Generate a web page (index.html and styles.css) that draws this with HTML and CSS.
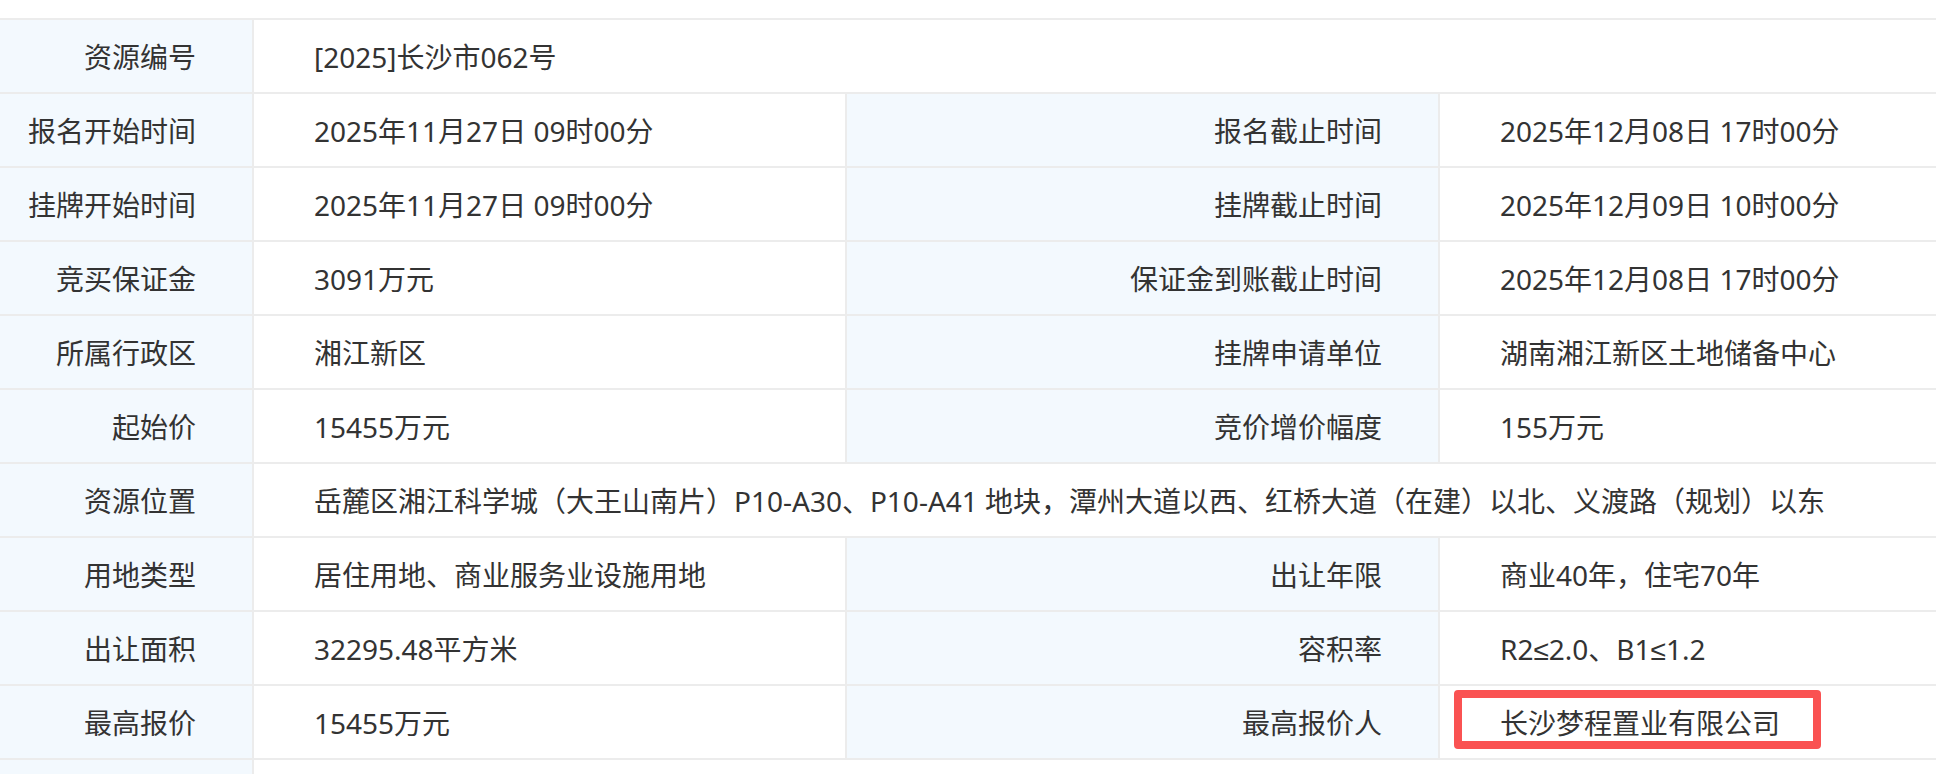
FILE: index.html
```html
<!DOCTYPE html>
<html lang="zh-CN">
<head>
<meta charset="utf-8">
<title>资源详情</title>
<link rel="stylesheet" href="styles.css">
</head>
<body>
<div class="page">
  <div class="info-grid">
    <div class="label">资源编号</div>
    <div class="value span3">[2025]长沙市062号</div>

    <div class="label">报名开始时间</div>
    <div class="value">2025年11月27日 09时00分</div>
    <div class="label">报名截止时间</div>
    <div class="value">2025年12月08日 17时00分</div>

    <div class="label">挂牌开始时间</div>
    <div class="value">2025年11月27日 09时00分</div>
    <div class="label">挂牌截止时间</div>
    <div class="value">2025年12月09日 10时00分</div>

    <div class="label">竞买保证金</div>
    <div class="value">3091万元</div>
    <div class="label">保证金到账截止时间</div>
    <div class="value">2025年12月08日 17时00分</div>

    <div class="label">所属行政区</div>
    <div class="value">湘江新区</div>
    <div class="label">挂牌申请单位</div>
    <div class="value">湖南湘江新区土地储备中心</div>

    <div class="label">起始价</div>
    <div class="value">15455万元</div>
    <div class="label">竞价增价幅度</div>
    <div class="value">155万元</div>

    <div class="label">资源位置</div>
    <div class="value span3">岳麓区湘江科学城（大王山南片）P10-A30、P10-A41 地块，潭州大道以西、红桥大道（在建）以北、义渡路（规划）以东</div>

    <div class="label">用地类型</div>
    <div class="value">居住用地、商业服务业设施用地</div>
    <div class="label">出让年限</div>
    <div class="value">商业40年，住宅70年</div>

    <div class="label">出让面积</div>
    <div class="value">32295.48平方米</div>
    <div class="label">容积率</div>
    <div class="value">R2≤2.0、B1≤1.2</div>

    <div class="label">最高报价</div>
    <div class="value">15455万元</div>
    <div class="label">最高报价人</div>
    <div class="value highlighted">长沙梦程置业有限公司<span class="mark-box"></span></div>

    <div class="label"></div>
    <div class="value span3"></div>
  </div>
</div>
</body>
</html>
```

FILE: styles.css
```css
html, body {
  margin: 0;
  padding: 0;
  overflow: hidden;
  background: #ffffff;
}

body {
  font-family: "Noto Sans", "Liberation Sans", "Noto Sans CJK SC", sans-serif;
  font-size: 28px;
  color: #333333;
}

.page {
  padding-top: 18px;
}

.info-grid {
  display: grid;
  grid-template-columns: 252px 591px 591px 700px;
  grid-auto-rows: 72px;
  gap: 2px;
  padding-top: 2px;
  width: max-content;
  background: #ececec;
}

.label,
.value {
  display: flex;
  align-items: center;
  white-space: nowrap;
}

.label {
  justify-content: flex-end;
  padding-right: 56px;
  background: #f3f9fe;
}

.value {
  padding-left: 60px;
  background: #ffffff;
}

.span3 {
  grid-column: span 3;
}

.highlighted {
  position: relative;
}

.mark-box {
  position: absolute;
  left: 14px;
  top: 4px;
  width: 367px;
  height: 59px;
  box-sizing: border-box;
  border: 8px solid #fa5252;
  border-radius: 4px;
}
```
